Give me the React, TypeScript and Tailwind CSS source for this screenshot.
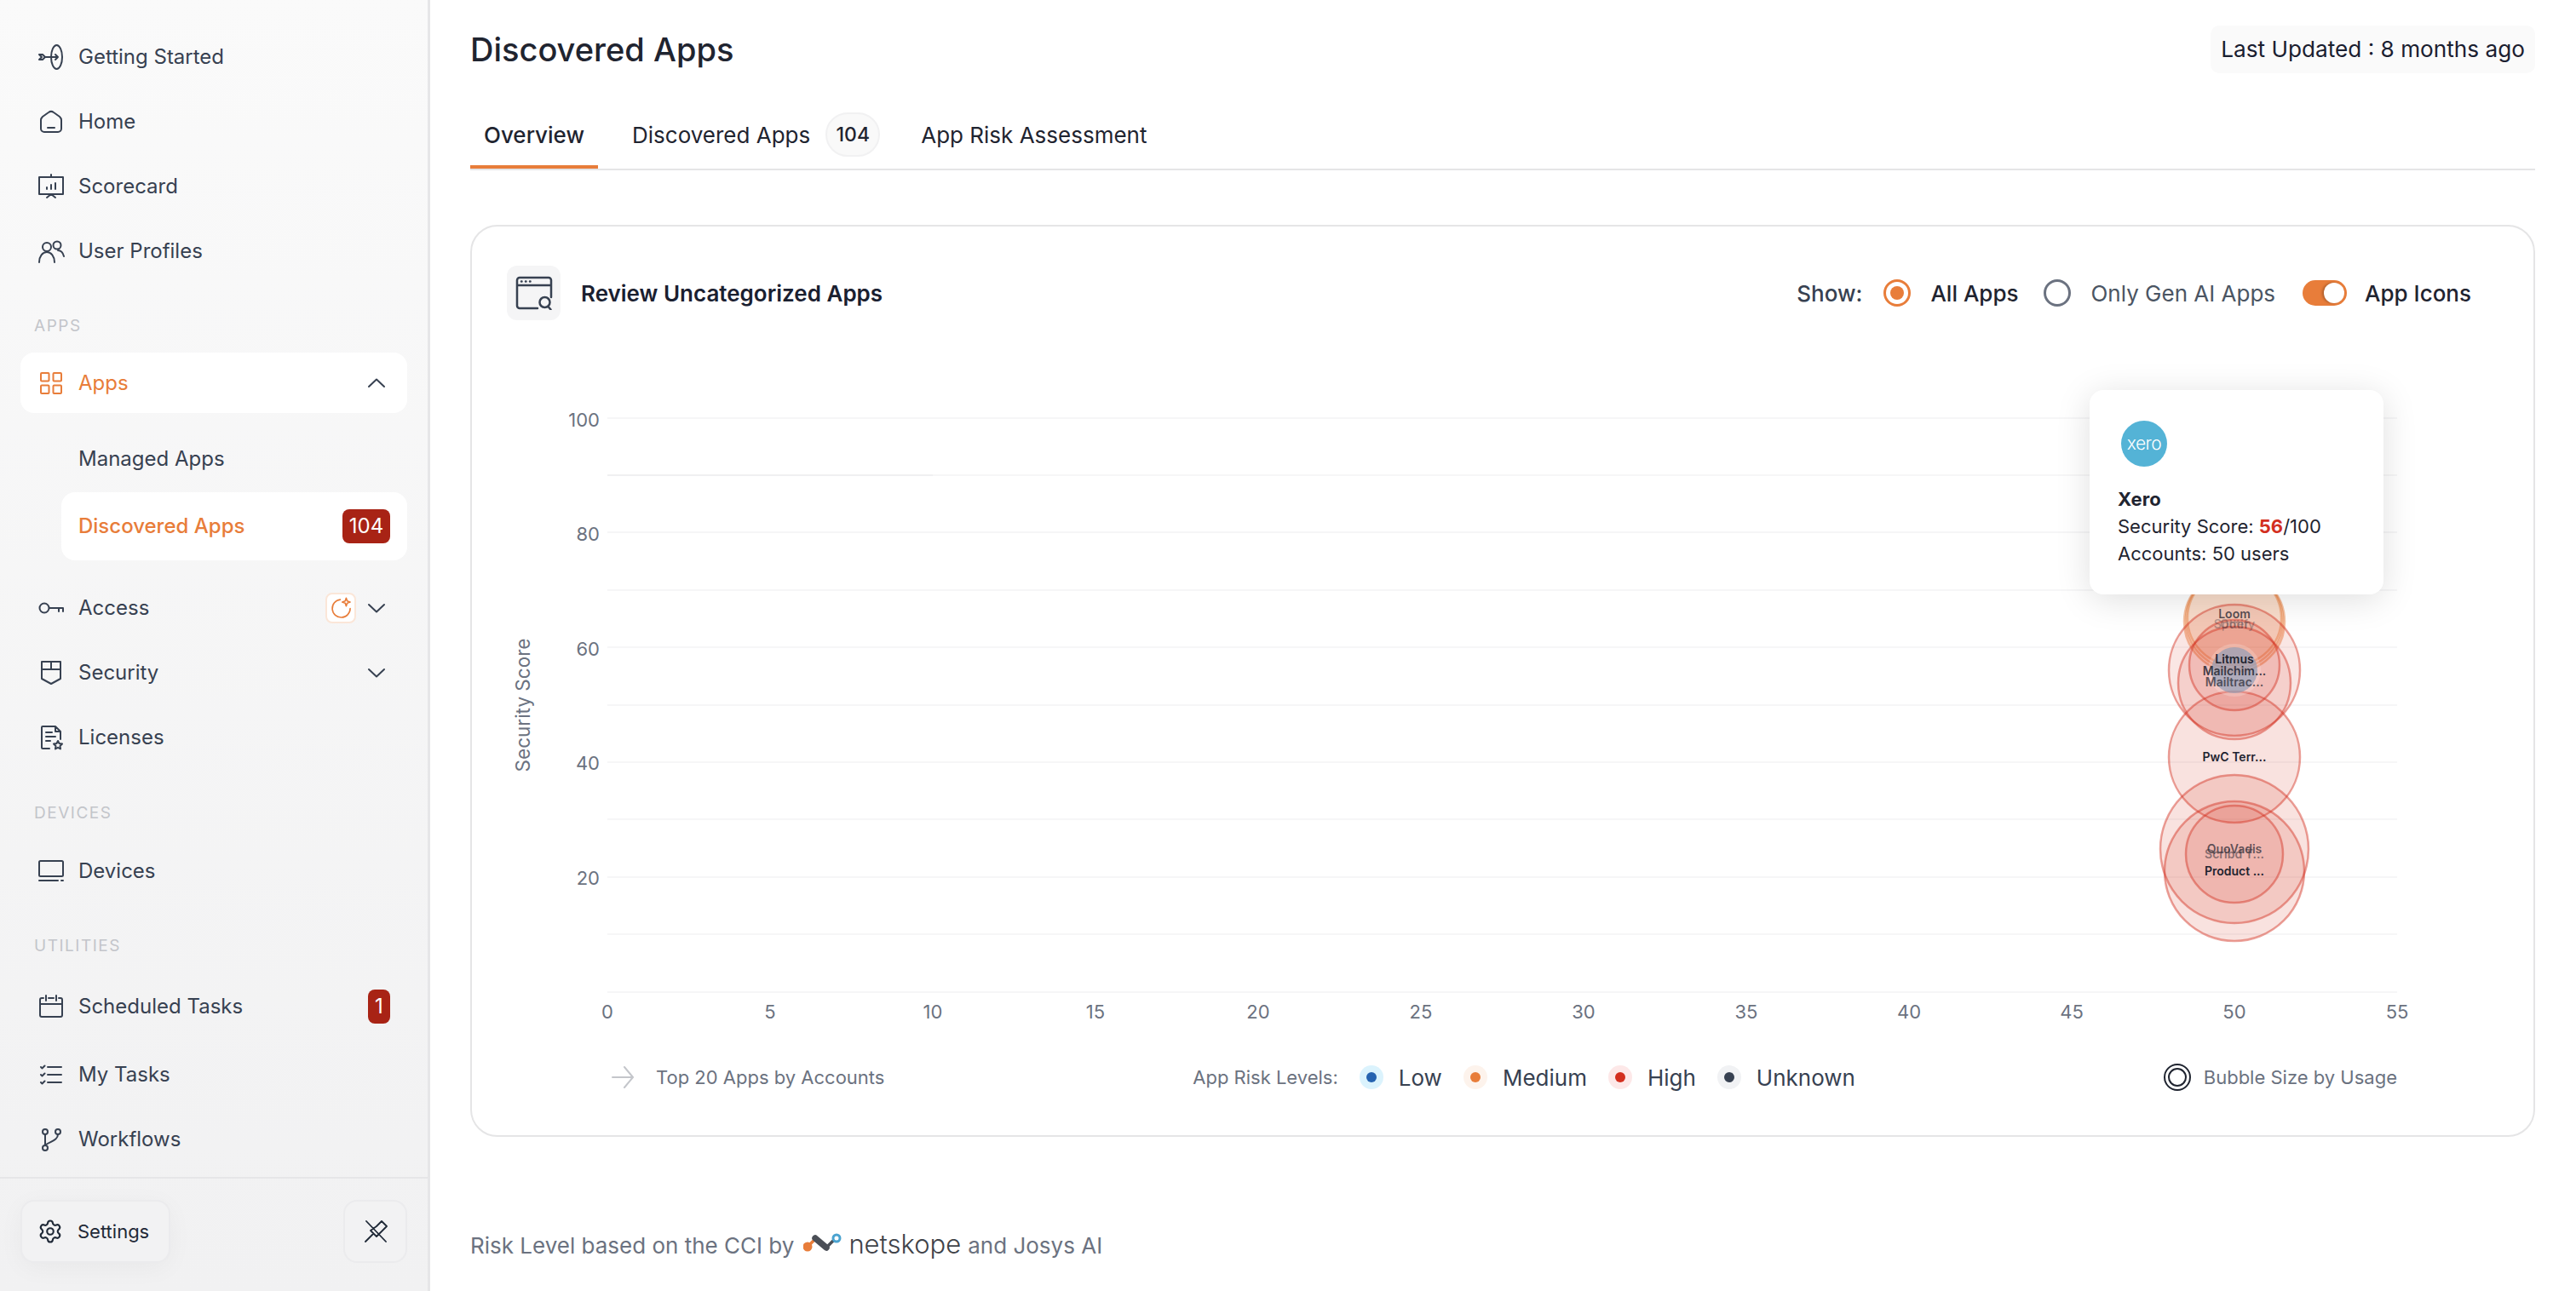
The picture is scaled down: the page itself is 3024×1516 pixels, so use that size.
import type { ReactNode } from "react";
import { Settings as Gear } from "lucide-react";

const ico = { fill: "none", stroke: "currentColor", strokeWidth: 2, strokeLinecap: "round" as const, strokeLinejoin: "round" as const };

function Icon({ children }: { children: ReactNode }) {
  return (
    <svg viewBox="0 0 32 32" className="w-8 h-8 shrink-0" {...ico}>
      {children}
    </svg>
  );
}

function Chevron({ up }: { up?: boolean }) {
  return (
    <svg viewBox="0 0 24 24" className="w-6 h-6 mr-1 text-[#374151]" {...ico}>
      <path d={up ? "M3 16 12 7.500 21 16" : "M3 8 12 16.500 21 8"} />
    </svg>
  );
}

function NavItem({ icon, label, children }: { icon: ReactNode; label: string; children?: ReactNode }) {
  return (
    <div className="h-[76px] flex items-center pl-5 pr-5 text-[#374151] text-[24px]">
      {icon}
      <span className="ml-4 flex-1">{label}</span>
      {children}
    </div>
  );
}

function SectionLabel({ children, className }: { children: string; className: string }) {
  return <div className={`h-6 pl-4 text-[19px] leading-6 tracking-[0.08em] text-[#c3c5ca] ${className}`}>{children}</div>;
}

function Sidebar() {
  return (
    <aside className="w-[505px] h-[1516px] shrink-0 flex flex-col border-r-[3px] border-[#e6e6e8] bg-gradient-to-b from-[#fafafa] to-[#f1f1f2]">
      <nav className="h-[1382px] px-6 pt-[29px]">
        <NavItem label="Getting Started" icon={
          <Icon>
            <ellipse cx="22.500" cy="16" rx="6.500" ry="14" />
            <path d="M8 16h16M21 13l3 3-3 3M2 13h4l3 3-3 3H2l3-3z" />
          </Icon>
        } />
        <NavItem label="Home" icon={
          <Icon>
            <path d="M4 14c0-2 1-3 2-4l7-5c2-1.500 4-1.500 6 0l7 5c1 1 2 2 2 4v10a4 4 0 0 1-4 4H8a4 4 0 0 1-4-4z" />
            <path d="M12 23h8" />
          </Icon>
        } />
        <NavItem label="Scorecard" icon={
          <Icon>
            <path d="M2 5h28v20H2zM16 2v3M16 25l-5 4M16 25l5 4M11 19v-2M16 19v-5M21 19v-7" />
          </Icon>
        } />
        <NavItem label="User Profiles" icon={
          <Icon>
            <circle cx="11" cy="11" r="5" />
            <circle cx="23" cy="9" r="4.500" />
            <path d="M2 29c0-7 4-12 9-12s9 5 9 12M24 15c4 0 6 3 7 7" />
          </Icon>
        } />

        <SectionLabel className="mt-[38px]">APPS</SectionLabel>
        <div className="mt-[19px] h-[71px] flex items-center pl-5 pr-5 bg-white rounded-2xl text-[24px] text-[#e87d3a]">
          <svg viewBox="0 0 32 32" className="w-8 h-8" {...ico}>
            <rect x="4" y="4" width="9.500" height="9.500" rx="1" />
            <rect x="18.500" y="4" width="9.500" height="9.500" rx="1" />
            <rect x="4" y="18.500" width="9.500" height="9.500" rx="1" />
            <rect x="18.500" y="18.500" width="9.500" height="9.500" rx="1" />
          </svg>
          <span className="ml-4 flex-1">Apps</span>
          <Chevron up />
        </div>
        <div className="mt-4 h-[76px] flex items-center pl-[68px] text-[24px] text-[#374151]">Managed Apps</div>
        <div className="mt-px ml-12 h-20 flex items-center justify-between pl-5 pr-5 bg-white rounded-2xl text-[24px] font-medium text-[#e87d3a]">
          <span>Discovered Apps</span>
          <span className="w-14 h-10 flex items-center justify-center rounded-lg bg-[#a82315] text-white font-normal">104</span>
        </div>

        <div className="mt-[18px]">
          <NavItem label="Access" icon={
            <Icon>
              <circle cx="8" cy="16" r="5.500" />
              <path d="M14 16h16M25 16v4M30 16v4" />
            </Icon>
          }>
            <span className="w-9 h-9 mr-3 flex items-center justify-center rounded-lg bg-white border-2 border-[#fbe6d8]">
              <svg viewBox="0 0 24 24" className="w-7 h-7 text-[#e87d3a]" fill="none" stroke="currentColor" strokeWidth="1.400" strokeLinecap="round" strokeLinejoin="round">
                <path d="M11.500 3.500a9 9 0 1 0 10 9" />
                <path d="M17.500 2l1 3 3 1-3 1-1 3-1-3-3-1 3-1z" />
              </svg>
            </span>
            <Chevron />
          </NavItem>
        </div>
        <NavItem label="Security" icon={
          <Icon>
            <path d="M5 3h22v20l-11 6-11-6zM5 12h22M16 3v9" />
          </Icon>
        }>
          <Chevron />
        </NavItem>
        <NavItem label="Licenses" icon={
          <Icon>
            <path d="M14 29H6a1 1 0 0 1-1-1V4a1 1 0 0 1 1-1h15l6 6v9M21 3v6h6M10 10h7M10 15h11M10 20h5" />
            <path d="M24 20l1.500 3 3.500.5-2.500 2.500.5 3.500-3-1.700-3 1.700.5-3.500-2.500-2.500 3.500-.5z" />
          </Icon>
        } />

        <SectionLabel className="mt-[39px]">DEVICES</SectionLabel>
        <div className="mt-[18px]">
          <NavItem label="Devices" icon={
            <Icon>
              <rect x="2" y="4" width="28" height="18" rx="1.500" />
              <path d="M2 27h22M28 27h2" />
            </Icon>
          } />
        </div>

        <SectionLabel className="mt-[38px]">UTILITIES</SectionLabel>
        <div className="mt-[21px]">
          <NavItem label="Scheduled Tasks" icon={
            <Icon>
              <path d="M7 6H5a2 2 0 0 0-2 2v18a2 2 0 0 0 2 2h22a2 2 0 0 0 2-2V8a2 2 0 0 0-2-2h-2M13 6h6M3 13h26M10 3v6M22 3v6" />
            </Icon>
          }>
            <span className="w-[26px] h-10 flex items-center justify-center rounded-lg bg-[#a82315] text-white">1</span>
          </NavItem>
        </div>
        <div className="mt-1">
          <NavItem label="My Tasks" icon={
            <Icon>
              <path d="M12 7h16M12 16h16M12 25h16M4 7l1.500 1.500 3-3M4 16l1.500 1.500 3-3M4 25l1.500 1.500 3-3" />
            </Icon>
          } />
        </div>
        <NavItem label="Workflows" icon={
          <Icon>
            <circle cx="9" cy="7" r="3" />
            <circle cx="24" cy="7" r="3" />
            <circle cx="9" cy="26" r="3" />
            <path d="M9 10v13M24 10c0 7-8 8-14 12" />
          </Icon>
        } />
      </nav>

      <div className="flex-1 border-t-2 border-[#e6e6e8] px-6 pt-[25px] flex justify-between items-start">
        <button className="w-[176px] h-[74px] flex items-center pl-[18px] gap-[17px] rounded-2xl border-2 border-[#ebebed] bg-[#f2f2f3] text-[22px] text-[#1f2937] shadow-[0_6px_30px_rgba(0,0,0,0.04)]">
          <Gear size={30} strokeWidth={1.700} />
          Settings
        </button>
        <button className="w-[75px] h-[74px] flex items-center justify-center rounded-2xl border-2 border-[#ebebed] bg-[#f2f2f3] text-[#1f2937]">
          <svg viewBox="0 0 28 28" className="w-7 h-7" {...ico} strokeWidth="1.800">
            <path d="M3 2l23 24M2 26l9-9M15 8l6-6 6 6-6 6M8 13l7-5M15 20l6-6M8 13l7 7" />
          </svg>
        </button>
      </div>
    </aside>
  );
}

function Radio({ on }: { on?: boolean }) {
  return (
    <span className={`w-8 h-8 rounded-full border-[3px] flex items-center justify-center ${on ? "border-[#e87d3a]" : "border-[#6b7280]"}`}>
      {on && <span className="w-4 h-4 rounded-full bg-[#e87d3a]" />}
    </span>
  );
}

function RiskDot({ halo, dot, label }: { halo: string; dot: string; label: string }) {
  return (
    <span className="flex items-center gap-[18px] text-[26px] text-[#374151]">
      <span className={`w-7 h-7 rounded-full flex items-center justify-center ${halo}`}>
        <span className={`w-3 h-3 rounded-full ${dot}`} />
      </span>
      {label}
    </span>
  );
}

const yTicks = [
  { v: 100, y: 493 },
  { v: 80, y: 627 },
  { v: 60, y: 762 },
  { v: 40, y: 896 },
  { v: 20, y: 1031 },
];
const gridLines = [491, 558, 625, 693, 760, 828, 895, 962, 1030, 1097, 1165];
const xTicks = [0, 5, 10, 15, 20, 25, 30, 35, 40, 45, 50, 55];

const bubbles = [
  { cy: 730, r: 59, c: "#e87d3a", f: 0.14 },
  { cy: 728, r: 57, c: "#e87d3a", f: 0.08 },
  { cy: 726, r: 55, c: "#e87d3a", f: 0.08 },
  { cy: 787, r: 77, c: "#d32f1f", f: 0.12 },
  { cy: 802, r: 66, c: "#d32f1f", f: 0.12 },
  { cy: 781, r: 53, c: "#d32f1f", f: 0.12 },
  { cy: 889, r: 77, c: "#d32f1f", f: 0.14 },
  { cy: 997, r: 87, c: "#d32f1f", f: 0.14 },
  { cy: 1023, r: 82, c: "#d32f1f", f: 0.14 },
  { cy: 1003, r: 57, c: "#d32f1f", f: 0.12 },
];

const bubbleLabels = [
  { y: 732, t: "Spotify", o: 0.3 },
  { y: 732, t: "Otter", o: 0.3 },
  { y: 720, t: "Loom", o: 0.75 },
  { y: 773, t: "Litmus", o: 1 },
  { y: 787, t: "Mailchim...", o: 0.85 },
  { y: 800, t: "Mailtrac...", o: 0.7 },
  { y: 888, t: "PwC Terr...", o: 1 },
  { y: 1002, t: "Scribd T...", o: 0.5 },
  { y: 996, t: "QuoVadis", o: 0.7 },
  { y: 1022, t: "Product ...", o: 1 },
];

function Chart() {
  return (
    <svg viewBox="554 420 2420 790" className="mt-11 w-[2420px] h-[790px] block">
      <text x="613" y="828" textAnchor="middle" dominantBaseline="central" transform="rotate(-90 613 828)" className="fill-[#6b7280] text-[22.500px]">Security Score</text>
      {gridLines.map((y) => (
        <line key={y} x1="713" x2="2814" y1={y} y2={y} stroke="#f6f6f7" strokeWidth="2" />
      ))}
      <line x1="713" x2="1095" y1="558" y2="558" stroke="#f0f0f1" strokeWidth="2" />
      {yTicks.map((t) => (
        <text key={t.v} x="704" y={t.y} textAnchor="end" dominantBaseline="central" className="fill-[#6b7280] text-[22px]">{t.v}</text>
      ))}
      {xTicks.map((v) => (
        <text key={v} x={713 + v * 38.2} y="1188" textAnchor="middle" dominantBaseline="central" className="fill-[#6b7280] text-[22px]">{v}</text>
      ))}
      {bubbles.map((b, i) => (
        <circle key={i} cx="2623" cy={b.cy} r={b.r} fill={b.c} fillOpacity={b.f} stroke={b.c} strokeOpacity="0.45" strokeWidth="2.500" />
      ))}
      <circle cx="2623" cy="787" r="31" fill="#fff" fillOpacity="0.2" />
      <circle cx="2623" cy="787" r="27" fill="#8a9bb5" fillOpacity="0.65" />
      {bubbleLabels.map((l) => (
        <text key={l.t} x="2623" y={l.y} textAnchor="middle" dominantBaseline="central" fillOpacity={l.o} className="fill-[#1f2430] text-[14px] font-semibold">{l.t}</text>
      ))}
    </svg>
  );
}

function Main() {
  return (
    <main className="flex-1 pl-[47px] pr-12">
      <div className="pt-[30px] h-[86px] flex items-center justify-between">
        <h1 className="text-[38px] font-medium text-[#1f2430]">Discovered Apps</h1>
        <span className="h-14 px-3 flex items-center rounded-[10px] bg-[#fafafa] text-[26.200px] text-[#1a2030]">Last Updated : 8 months ago</span>
      </div>

      <div className="mt-8 h-[82px] flex items-center border-b-2 border-[#e5e5e6] text-[26px] text-[#1f2430]">
        <div className="relative h-20 w-[150px] flex items-center justify-center font-medium">
          Overview
          <span className="absolute left-0 right-0 bottom-0 h-1 bg-[#e87d3a]" />
        </div>
        <div className="ml-10 flex items-center">
          Discovered Apps
          <span className="ml-[18px] w-16 h-[52px] flex items-center justify-center rounded-full bg-[#f9f9f9] border-2 border-[#f1f1f2] text-[23px] font-medium">104</span>
        </div>
        <div className="ml-[48px]">App Risk Assessment</div>
      </div>

      <section className="relative mt-16 h-[1071px] rounded-[32px] border-2 border-[#e5e5e6]">
        <div className="pt-[46px] pl-[41px] pr-[73px] flex items-center justify-between">
          <div className="flex items-center gap-6">
            <span className="w-[63px] h-16 flex items-center justify-center rounded-xl bg-[#f5f5f6] text-[#374151]">
              <svg viewBox="0 0 44 40" className="w-11 h-10" fill="none" stroke="currentColor" strokeWidth="2.500" strokeLinecap="round" strokeLinejoin="round">
                <path d="M26 38H5a3 3 0 0 1-3-3V5a3 3 0 0 1 3-3h34a3 3 0 0 1 3 3v20M2 11h40M7 6.500h.5M12 6.500h.5M17 6.500h.5" />
                <circle cx="34.500" cy="31" r="6" />
                <path d="M38.500 36l3 3.500" />
              </svg>
            </span>
            <span className="text-[26px] font-semibold text-[#1a2030]">Review Uncategorized Apps</span>
          </div>
          <div className="flex items-center text-[26px]">
            <span className="font-medium text-[#374151]">Show:</span>
            <span className="ml-[25px]"><Radio on /></span>
            <span className="ml-[23px] font-medium text-[#1f2430]">All Apps</span>
            <span className="ml-[30px]"><Radio /></span>
            <span className="ml-[23px] text-[#4b5563]">Only Gen AI Apps</span>
            <span className="ml-8 w-[52px] h-[30px] flex items-center justify-end pr-[3px] rounded-full bg-[#e87d3a]">
              <span className="w-6 h-6 rounded-full bg-white shadow-[-2px_0_3px_rgba(0,0,0,0.25)]" />
            </span>
            <span className="ml-[21px] font-medium text-[#1f2430]">App Icons</span>
          </div>
        </div>

        <Chart />

        <div className="mt-[27px] h-14 pl-[164px] pr-[160px] flex items-center justify-between">
          <div className="flex items-center gap-[26px] text-[22px] text-[#6b7280]">
            <svg viewBox="0 0 26 26" className="w-[26px] h-[26px] text-[#c4c6cb]" {...ico}>
              <path d="M1 13h24M15 1l10 12-10 12" />
            </svg>
            Top 20 Apps by Accounts
          </div>
          <div className="flex items-center gap-[25px]">
            <span className="text-[22px] text-[#6b7280]">App Risk Levels:</span>
            <RiskDot halo="bg-[#dbf3fd]" dot="bg-[#2563b0]" label="Low" />
            <RiskDot halo="bg-[#fdf3ec]" dot="bg-[#e87d3a]" label="Medium" />
            <RiskDot halo="bg-[#fde8e8]" dot="bg-[#d32f1f]" label="High" />
            <RiskDot halo="bg-[#f1f2f4]" dot="bg-[#374151]" label="Unknown" />
          </div>
          <div className="flex items-center gap-[15px] text-[22px] text-[#6b7280]">
            <span className="w-8 h-8 flex items-center justify-center rounded-full border-2 border-[#1f2430]">
              <span className="w-[22px] h-[22px] rounded-full border-2 border-[#1f2430]" />
            </span>
            Bubble Size by Usage
          </div>
        </div>

        <div className="absolute left-[1899px] top-[192px] w-[345px] h-[240px] pl-[33px] pt-[36px] rounded-2xl bg-white shadow-[0_6px_40px_rgba(0,0,0,0.13)] text-[22px] leading-8 text-[#1f2430]">
          <span className="ml-[4px] w-[54px] h-[54px] flex items-center justify-center rounded-full bg-[#54b3d6] text-white text-[21px] font-light tracking-tight">xero</span>
          <div className="mt-[22px] font-bold">Xero</div>
          <div>Security Score: <b className="text-[#d32f1f]">56</b>/100</div>
          <div>Accounts: 50 users</div>
        </div>
      </section>

      <div className="mt-[105px] flex items-center text-[26px] text-[#6b7280]">
        Risk Level based on the CCI by
        <svg viewBox="0 0 45 24" className="ml-[11px] -mt-[4px] w-[45px] h-6" fill="none" strokeLinecap="round">
          <path d="M5 16l9-9" stroke="#e87d3a" strokeWidth="3.500" />
          <circle cx="5" cy="16" r="5.500" fill="#e87d3a" />
          <path d="M14 6l13 11" stroke="#4b4f57" strokeWidth="7.500" />
          <path d="M27 17l8-8" stroke="#4b4f57" strokeWidth="3.500" />
          <circle cx="39" cy="6" r="4" stroke="#4aa3d0" strokeWidth="3" />
        </svg>
        <span className="ml-2 -mt-[2px] text-[31px] font-light text-[#3f4349]">netskope</span>
        <span className="ml-2">and Josys AI</span>
      </div>
    </main>
  );
}

export default function App() {
  return (
    <div className="flex w-[3024px] h-[1516px] overflow-hidden bg-white font-['Inter',sans-serif]">
      <Sidebar />
      <Main />
    </div>
  );
}
